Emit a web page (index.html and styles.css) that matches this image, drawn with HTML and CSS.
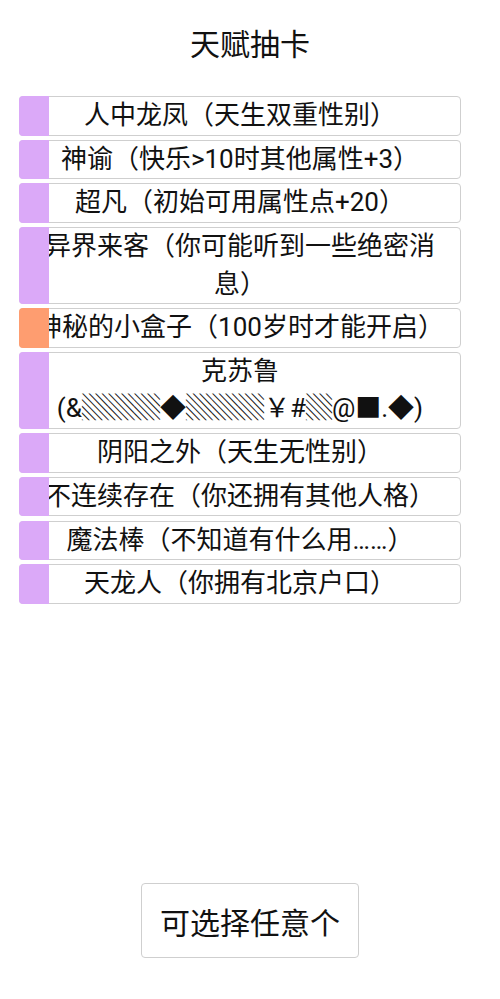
FILE: index.html
```html
<!DOCTYPE html>
<html>
<head>
    <meta charset="UTF-8">
    <title>天赋抽卡</title>
    <link rel="stylesheet" href="styles.css">
</head>
<body>
    <div class="page">
        <h1 class="titulo">天赋抽卡</h1>
        <div class="lista">
            <div class="talento"><span class="marca roxo"></span>人中龙凤（天生双重性别）</div>
            <div class="talento"><span class="marca roxo"></span>神谕（快乐&gt;10时其他属性+3）</div>
            <div class="talento"><span class="marca roxo"></span>超凡（初始可用属性点+20）</div>
            <div class="talento"><span class="marca roxo"></span>异界来客（你可能听到一些绝密消息）</div>
            <div class="talento"><span class="marca laranja"></span>神秘的小盒子（100岁时才能开启）</div>
            <div class="talento"><span class="marca roxo"></span>克苏鲁(&amp;▒▒▒◆▒▒▒￥#▒@■.◆)</div>
            <div class="talento"><span class="marca roxo"></span>阴阳之外（天生无性别）</div>
            <div class="talento"><span class="marca roxo"></span>不连续存在（你还拥有其他人格）</div>
            <div class="talento"><span class="marca roxo"></span>魔法棒（不知道有什么用……）</div>
            <div class="talento"><span class="marca roxo"></span>天龙人（你拥有北京户口）</div>
        </div>
        <div class="rodape">
            <button class="botao">可选择任意个</button>
        </div>
    </div>
</body>
</html>
```
FILE: styles.css
```css
body {
    margin: 0;
    font-family: Roboto, "Noto Sans CJK SC", sans-serif;
    color: #111;
    background-color: #fff;
}

.page {
    display: flex;
    flex-direction: column;
    min-height: 100vh;
}

.titulo {
    margin: 27px 0 33px;
    font-size: 30px;
    font-weight: normal;
    line-height: 36px;
    text-align: center;
}

.lista {
    margin: 0 39px 0 19px;
}

.talento {
    position: relative;
    margin-bottom: 4.2px;
    padding: 0 14px;
    border: 1px solid #cfcfcf;
    border-radius: 4px;
    font-size: 26px;
    line-height: 37.5px;
    text-align: center;
}

.marca {
    position: absolute;
    left: -1px;
    top: -1px;
    bottom: -1px;
    width: 30px;
    border-radius: 4px 0 0 4px;
}

.roxo {
    background-color: #dba9f8;
}

.laranja {
    background-color: #fe9d70;
}

.rodape {
    margin-top: auto;
    padding-bottom: 41px;
    text-align: center;
}

.botao {
    height: 75px;
    padding: 0 18px;
    border: 1px solid #cfcfcf;
    border-radius: 4px;
    background-color: #fff;
    color: #111;
    font-family: Roboto, "Noto Sans CJK SC", sans-serif;
    font-size: 30px;
}
```
